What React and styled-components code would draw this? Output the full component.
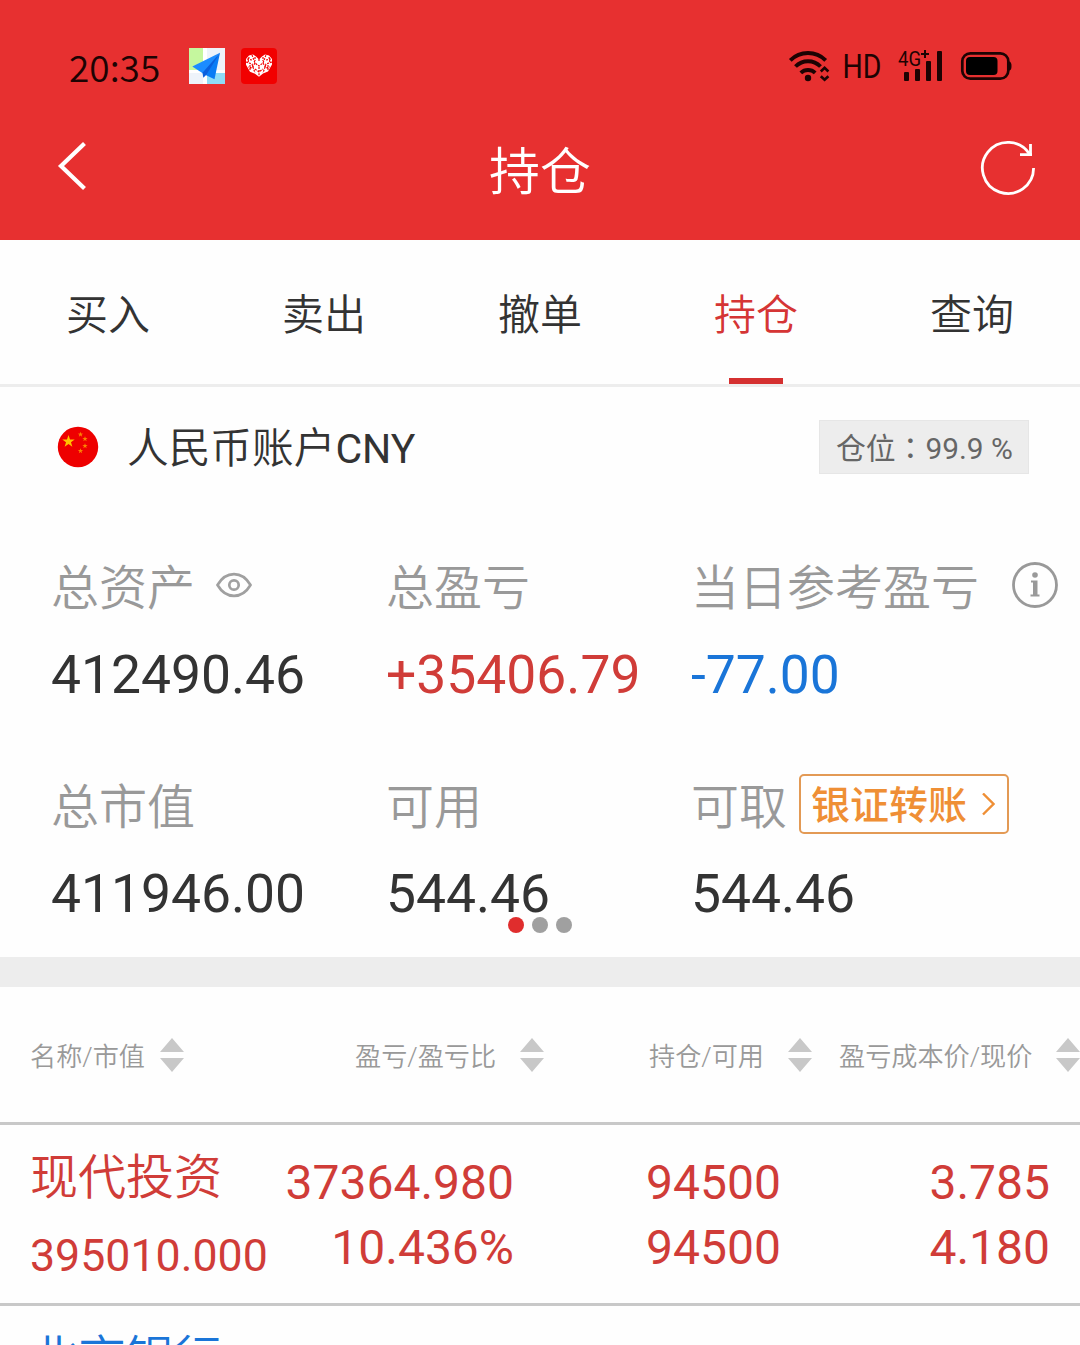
import React from 'react';
import styled, { createGlobalStyle } from 'styled-components';

const GlobalStyle = createGlobalStyle`
    body {
        margin: 0;
        background: #fff;
    }
    * {
        box-sizing: border-box;
    }
    svg {
        display: block;
        flex: none;
    }
`;

const Screen = styled.div`
    width: 1080px;
    height: 1345px;
    overflow: hidden;
    background: #fefefe;
    color: #333;
    font-family: Roboto, "Noto Sans CJK SC", sans-serif;
    white-space: nowrap;
`;

const Top = styled.header`
    height: 240px;
    background: #e73030;
`;

const StatusBar = styled.div`
    height: 96px;
    padding: 36px 68px 0 69px;
    display: flex;
    align-items: center;
    color: #1d0303;
`;

const Clock = styled.span`
    width: 120px;
    font-family: "Noto Sans CJK SC", sans-serif;
    font-size: 37px;
    line-height: 56px;
    font-weight: 350;
`;

const AppIcons = styled.div`
    flex: 1;
    display: flex;
    gap: 16px;
`;

const TitleBar = styled.div`
    height: 144px;
    padding: 0 44px 0 56px;
    display: flex;
    align-items: center;
    justify-content: space-between;
`;

const Title = styled.h1`
    margin: 0;
    padding: 9px 0 0 12px;
    font-size: 51px;
    line-height: 72px;
    font-weight: 350;
    color: #fff;
`;

const Tabs = styled.nav`
    height: 147px;
    display: grid;
    grid-template-columns: repeat(5, 1fr);
    border-bottom: 3px solid #ededed;
`;

const Tab = styled.a`
    display: flex;
    flex-direction: column;
    align-items: center;
    justify-content: space-between;
    padding-top: 46px;
    font-size: 42px;
    line-height: 60px;
    font-weight: 350;
    color: ${({ $active }) => ($active ? '#d53535' : '#333')};
    &::after {
        content: '';
        width: 54px;
        height: 6px;
        background: ${({ $active }) => ($active ? '#d53030' : 'transparent')};
    }
`;

const AccountRow = styled.div`
    height: 120px;
    padding: 0 51px 0 57px;
    display: flex;
    align-items: center;
`;

const AccountName = styled.span`
    flex: 1;
    padding-left: 28px;
    padding-top: 4px;
    font-size: 41.7px;
    line-height: 60px;
    font-weight: 350;
`;

const Currency = styled.span`
    font-size: 41px;
    font-weight: 400;
`;

const PositionBadge = styled.span`
    width: 210px;
    height: 54px;
    padding-left: 16px;
    border: 1px solid #e6e6e6;
    background: #ededed;
    color: #666;
    font-family: Roboto, "Noto Sans CJK TC", sans-serif;
    font-size: 29.8px;
    line-height: 55px;
`;

const Summary = styled.section`
    position: relative;
    height: 450px;
    padding: 40px 0 0 51px;
    display: grid;
    grid-template-columns: 335px 305px 1fr;
    grid-auto-rows: 219px;
`;

const Stat = styled.div`
    display: flex;
    flex-direction: column;
`;

const StatLabel = styled.div`
    height: 76px;
    display: flex;
    align-items: center;
    font-size: 48px;
    line-height: 76px;
    font-weight: 350;
    color: #999;
`;

const LabelText = styled.span`
    padding-top: 8px;
    margin-right: ${({ $gap }) => $gap || 0}px;
`;

const StatValue = styled.div`
    margin-top: 14px;
    font-size: 53.4px;
    line-height: 76px;
    color: ${({ $color }) => $color || '#333'};
`;

const TransferButton = styled.button`
    width: 210px;
    height: 60px;
    padding: 4px 12px 0 10px;
    display: flex;
    align-items: center;
    justify-content: space-between;
    border: 2px solid #e39a55;
    border-radius: 5px;
    background: #fff;
    color: #ef8f35;
    font-family: inherit;
    font-size: 39px;
    line-height: 56px;
    font-weight: 500;
`;

const Pager = styled.div`
    position: absolute;
    left: 508px;
    top: 410px;
    display: flex;
    gap: 8px;
`;

const Dot = styled.span`
    width: 16px;
    height: 16px;
    border-radius: 50%;
    background: ${({ $on }) => ($on ? '#e02d2d' : '#a0a0a0')};
`;

const Divider = styled.div`
    height: 30px;
    background: #ededed;
`;

const TableHead = styled.div`
    height: 138px;
    padding-left: 30px;
    display: grid;
    grid-template-columns: 325px 294px 190px 1fr;
    align-items: center;
    border-bottom: 3px solid #c8c8c8;
`;

const HeadCell = styled.div`
    width: ${({ $width }) => $width}px;
    display: flex;
    align-items: center;
    justify-content: space-between;
    font-size: 26.15px;
    font-weight: 350;
    color: #999;
`;

const HeadText = styled.span`
    padding-top: 4px;
    line-height: 40px;
`;

const HoldingRow = styled.div`
    height: 181px;
    padding: 0 30px 0 30px;
    display: grid;
    grid-template-columns: 250px 234px 267px 1fr;
    border-bottom: 3px solid #c8c8c8;
    color: ${({ $color }) => $color};
`;

const NameCell = styled.div`
    padding-top: 22px;
    font-size: 44.7px;
    line-height: 80px;
`;

const StockName = styled.div`
    font-size: 48px;
    line-height: 62px;
    margin-bottom: 7px;
    font-weight: 350;
`;

const NumberCell = styled.div`
    padding-top: 25px;
    text-align: right;
    font-size: 48px;
    line-height: 65px;
`;

const MapIcon = () => (
    <svg width="36" height="36" viewBox="0 0 36 36">
        <rect width="36" height="36" fill="#eef3fa" />
        <path d="M0 0h14v22H0z" fill="#c5f79e" />
        <path d="M18 25h18v11H18z" fill="#8fdcf7" />
        <path d="M14 0h4v36h-4zM0 22h36v3H0z" fill="#fff" />
        <path d="M31 4.700L3.300 18.500l11.500 7.500z" fill="#1c8cff" />
        <path d="M31 4.700L14.500 26l11 5.300z" fill="#0a7cf5" />
        <path d="M31 4.700L13.500 24.800l.8 5 3-3z" fill="#0a5fdc" />
    </svg>
);

const HeartIcon = () => (
    <svg width="36" height="36" viewBox="0 0 36 36">
        <rect width="36" height="36" rx="4" fill="#f20000" />
        <path
            d="M18 28.700l-4-3-5-2-4-7V11l3-3.500 4-1 3 2 3 3 3-3 3-2 4 1L31 11v5.500l-4 7-5 2z"
            fill="#fff"
        />
        <path
            d="M18 11v3M18 19v9M11 7l3 8 4 3 4-3 3-8M5 14l6 2 3 9M31 14l-6 2-3 9M14 15l-3 5-4-1M22 15l3 5 4-1M8 9l-1 6M28 9l1 6M14 9v4M22 9v4M14 21l4 3 4-3M6 11l5 1M30 11l-5 1M9 17v6M27 17v6"
            fill="none"
            stroke="#f20000"
            strokeWidth="1.200"
            strokeDasharray="2 1.100"
        />
    </svg>
);

const SignalIcons = () => (
    <svg width="226" height="46" viewBox="786 43 226 46" fill="none" stroke="#1d0303">
        <path d="M790.300 60.300a25 25 0 0 1 35.400 0M795.500 66.500a17.500 17.500 0 0 1 25 0M800.800 72.800a10.500 10.500 0 0 1 14.400 0" strokeWidth="3.900" />
        <circle cx="808" cy="78" r="3.200" fill="#1d0303" stroke="none" />
        <path d="M820.800 71.500l3.800-3.600 3.800 3.600M820.800 76.200l3.800 3.600 3.800-3.600" strokeWidth="2.600" />
        <g fill="#1d0303" stroke="none" fontFamily="Roboto, sans-serif">
            <text x="842.500" y="78" fontSize="34" textLength="39" lengthAdjust="spacingAndGlyphs">HD</text>
            <text x="898" y="66" fontSize="20" textLength="23" lengthAdjust="spacingAndGlyphs">4G</text>
            <path d="M921 53h3v-3h2v3h3v2h-3v3h-2v-3h-3z" />
            <rect x="904" y="72" width="5" height="9" rx="1" />
            <rect x="915" y="69" width="5" height="12" rx="1" />
            <rect x="926" y="61" width="5" height="20" rx="1" />
            <rect x="937" y="51" width="5" height="30" rx="1" />
            <rect x="966" y="57" width="31.500" height="18" rx="4" fill="#000" />
            <path d="M1009 61.500q2.500 0 2.500 4.500t-2.500 4.500z" />
        </g>
        <rect x="962.300" y="53.300" width="46" height="25.400" rx="8" strokeWidth="2.700" />
    </svg>
);

const BackIcon = () => (
    <svg width="32" height="52" viewBox="56 142 32 52">
        <path d="M84.500 143.500L61 166l23.500 22.500" fill="none" stroke="#fff" strokeWidth="4.200" />
    </svg>
);

const RefreshIcon = () => (
    <svg width="56" height="56" viewBox="980 140 56 56" fill="none" stroke="#fff" strokeWidth="2.800">
        <path d="M1033.600 168A25.600 25.600 0 1 1 1029.500 154" />
        <path d="M1030.500 144v10.600M1020 154.600h12" />
    </svg>
);

const starPoints = (cx, cy, r) =>
    Array.from({ length: 10 }, (_, i) => {
        const a = (Math.PI / 5) * i - Math.PI / 2;
        const d = i % 2 ? r * 0.4 : r;
        return `${cx + d * Math.cos(a)},${cy + d * Math.sin(a)}`;
    }).join(' ');

const FlagIcon = () => (
    <svg width="42" height="42" viewBox="0 0 42 42">
        <circle cx="21" cy="21" r="20.200" fill="#ee0000" />
        <polygon points={starPoints(11.500, 15.500, 6.500)} fill="#ffc400" />
        {[[23.500, 8.500], [28, 13], [28, 20], [23.500, 25]].map(([x, y]) => (
            <polygon key={y} points={starPoints(x, y, 2.800)} fill="#fb8500" />
        ))}
    </svg>
);

const EyeIcon = () => (
    <svg width="36" height="26" viewBox="0 0 36 26" fill="none" stroke="#a0a0a0" strokeWidth="2.700">
        <path d="M1.500 13C10 -1.500 26 -1.500 34.500 13C26 27.500 10 27.500 1.500 13z" />
        <circle cx="18" cy="13" r="4.700" />
    </svg>
);

const InfoIcon = () => (
    <svg width="46" height="46" viewBox="0 0 46 46">
        <circle cx="23" cy="23" r="21.500" fill="none" stroke="#999" strokeWidth="2.800" />
        <circle cx="23" cy="13" r="2.800" fill="#999" />
        <path d="M19 18.500h6.500v14h2v2h-9v-2h2.500v-12h-2z" fill="#999" />
    </svg>
);

const ArrowIcon = () => (
    <svg width="14" height="26" viewBox="0 0 14 26">
        <path d="M2 .500L12.500 11 2 21.500" fill="none" stroke="#ef8f35" strokeWidth="2.400" />
    </svg>
);

const SortIcon = () => (
    <svg width="24" height="34" viewBox="0 0 24 34" fill="#c8c8c8">
        <path d="M12 0l12 14H0zM0 20h24L12 34z" />
    </svg>
);

const tabs = ['买入', '卖出', '撤单', '持仓', '查询'];

const columns = [
    { name: '名称/市值', width: 154 },
    { name: '盈亏/盈亏比', width: 189 },
    { name: '持仓/可用', width: 163 },
    { name: '盈亏成本价/现价', width: 241 },
];

const holdings = [
    {
        name: '现代投资',
        value: '395010.000',
        cells: [['37364.980', '10.436%'], ['94500', '94500'], ['3.785', '4.180']],
        color: '#d03c38',
    },
    { name: '北京银行', cells: [], color: '#1a75d8' },
];

function App() {
    return (
        <Screen>
            <GlobalStyle />
            <Top>
                <StatusBar>
                    <Clock>20:35</Clock>
                    <AppIcons>
                        <MapIcon />
                        <HeartIcon />
                    </AppIcons>
                    <SignalIcons />
                </StatusBar>
                <TitleBar>
                    <BackIcon />
                    <Title>持仓</Title>
                    <RefreshIcon />
                </TitleBar>
            </Top>
            <Tabs>
                {tabs.map((tab) => (
                    <Tab key={tab} $active={tab === '持仓'}>{tab}</Tab>
                ))}
            </Tabs>
            <AccountRow>
                <FlagIcon />
                <AccountName>人民币账户<Currency>CNY</Currency></AccountName>
                <PositionBadge>仓位：99.9 %</PositionBadge>
            </AccountRow>
            <Summary>
                <Stat>
                    <StatLabel><LabelText $gap={21}>总资产</LabelText><EyeIcon /></StatLabel>
                    <StatValue>412490.46</StatValue>
                </Stat>
                <Stat>
                    <StatLabel><LabelText>总盈亏</LabelText></StatLabel>
                    <StatValue $color="#d03c38">+35406.79</StatValue>
                </Stat>
                <Stat>
                    <StatLabel><LabelText $gap={33}>当日参考盈亏</LabelText><InfoIcon /></StatLabel>
                    <StatValue $color="#1a75d8">-77.00</StatValue>
                </Stat>
                <Stat>
                    <StatLabel><LabelText>总市值</LabelText></StatLabel>
                    <StatValue>411946.00</StatValue>
                </Stat>
                <Stat>
                    <StatLabel><LabelText>可用</LabelText></StatLabel>
                    <StatValue>544.46</StatValue>
                </Stat>
                <Stat>
                    <StatLabel>
                        <LabelText $gap={12}>可取</LabelText>
                        <TransferButton>银证转账<ArrowIcon /></TransferButton>
                    </StatLabel>
                    <StatValue>544.46</StatValue>
                </Stat>
                <Pager>
                    <Dot $on />
                    <Dot />
                    <Dot />
                </Pager>
            </Summary>
            <Divider />
            <TableHead>
                {columns.map(({ name, width }) => (
                    <HeadCell key={name} $width={width}>
                        <HeadText>{name}</HeadText>
                        <SortIcon />
                    </HeadCell>
                ))}
            </TableHead>
            {holdings.map(({ name, value, cells, color }) => (
                <HoldingRow key={name} $color={color}>
                    <NameCell>
                        <StockName>{name}</StockName>
                        {value}
                    </NameCell>
                    {cells.map(([first, second], i) => (
                        <NumberCell key={i}>
                            <div>{first}</div>
                            <div>{second}</div>
                        </NumberCell>
                    ))}
                </HoldingRow>
            ))}
        </Screen>
    );
}

export default App;
